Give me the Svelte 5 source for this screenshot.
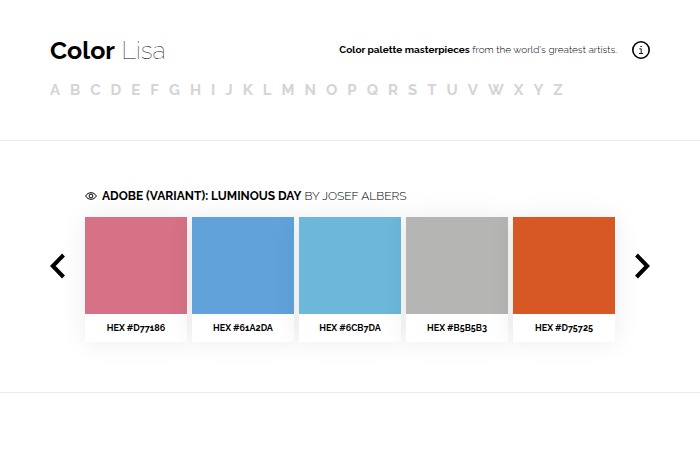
<script>
  const letters = 'ABCDEFGHIJKLMNOPQRSTUVWXYZ'.split('');
  const colors = ['#D77186', '#61A2DA', '#6CB7DA', '#B5B5B3', '#D75725'];
</script>

<header>
  <div class="top">
    <h1><a href="#home"><strong>Color</strong> Lisa</a></h1>
    <p><strong>Color palette masterpieces</strong> from the world's greatest artists.</p>
    <button class="info" aria-label="Information">
      <svg width="18" height="18" viewBox="0 0 18 18" fill="none" stroke="#000">
        <circle cx="9" cy="9" r="8.2" stroke-width="1.6" />
        <path d="M7.3 7.8H9.2V12.4M7 12.5H11.2" stroke-width=".9" />
        <path d="M8.4 5.5H9.8" stroke-width="1.2" />
      </svg>
    </button>
  </div>
  <nav aria-label="Artists by letter">
    {#each letters as letter}
      <a href={`#${letter}`}>{letter}</a>
    {/each}
  </nav>
</header>

<main>
  <button class="arrow" aria-label="Previous palette">
    <svg width="16" height="26" viewBox="0 0 16 26" fill="none" stroke="#000" stroke-width="4">
      <path d="M13.5 2L2.8 13L13.5 24" />
    </svg>
  </button>
  <section>
    <h2>
      <svg width="12" height="10" viewBox="0 0 12 10" fill="none" stroke="#000" stroke-width="1">
        <path d="M.6 5C3.2.6 8.8.6 11.4 5C8.8 9.4 3.2 9.4.6 5Z" />
        <circle cx="6" cy="5" r="1.9" />
      </svg>
      <span><strong>Adobe (Variant): Luminous Day</strong> by <a href="#albers">Josef Albers</a></span>
    </h2>
    <ul>
      {#each colors as color}
        <li>
          <div class="swatch" style:background-color={color}></div>
          <span>HEX {color}</span>
        </li>
      {/each}
    </ul>
  </section>
  <button class="arrow" aria-label="Next palette">
    <svg width="16" height="26" viewBox="0 0 16 26" fill="none" stroke="#000" stroke-width="4">
      <path d="M2.5 2L13.2 13L2.5 24" />
    </svg>
  </button>
</main>

<style>
  :global(body) {
    background: #fff;
    color: #000;
    font-family: Raleway, Lato, sans-serif;
  }
  h1, h2, p, ul {
    margin: 0;
    padding: 0;
  }
  a {
    color: inherit;
    text-decoration: none;
  }
  svg {
    display: block;
  }
  button {
    display: block;
    padding: 0;
    border: 0;
    background: none;
    cursor: pointer;
  }
  header {
    padding: 36px 50px 40px;
    border-bottom: 1px solid #ebebeb;
  }
  .top {
    display: flex;
    align-items: center;
  }
  h1 {
    flex: 1;
    font-size: 25px;
    line-height: 28px;
    font-weight: 100;
  }
  strong,
  h1 strong {
    font-weight: 700;
  }
  p {
    font-size: 10px;
    line-height: 16px;
    font-weight: 300;
  }
  .info {
    margin-left: 15px;
  }
  nav {
    display: flex;
    flex-wrap: wrap;
    gap: 10px;
    margin-top: 16px;
    font-size: 15px;
    line-height: 20px;
    font-weight: 700;
    color: #d4d4d4;
  }
  main {
    display: flex;
    align-items: center;
    gap: 19px;
    padding: 46px 50px 50px;
    border-bottom: 1px solid #ebebeb;
  }
  .arrow {
    padding-top: 2px;
  }
  section {
    flex: 1;
  }
  h2 {
    display: flex;
    align-items: center;
    gap: 5px;
    margin-bottom: 12px;
    font-size: 12px;
    line-height: 18px;
    font-weight: 300;
    text-transform: uppercase;
  }
  ul {
    display: flex;
    gap: 5px;
    list-style: none;
  }
  li {
    flex: 1;
    background: #fff;
    box-shadow: 0 0 25px rgba(0, 0, 0, 0.08);
    text-align: center;
  }
  .swatch {
    height: 97px;
  }
  li span {
    display: block;
    font-size: 9px;
    line-height: 28px;
    font-weight: 700;
  }
</style>
